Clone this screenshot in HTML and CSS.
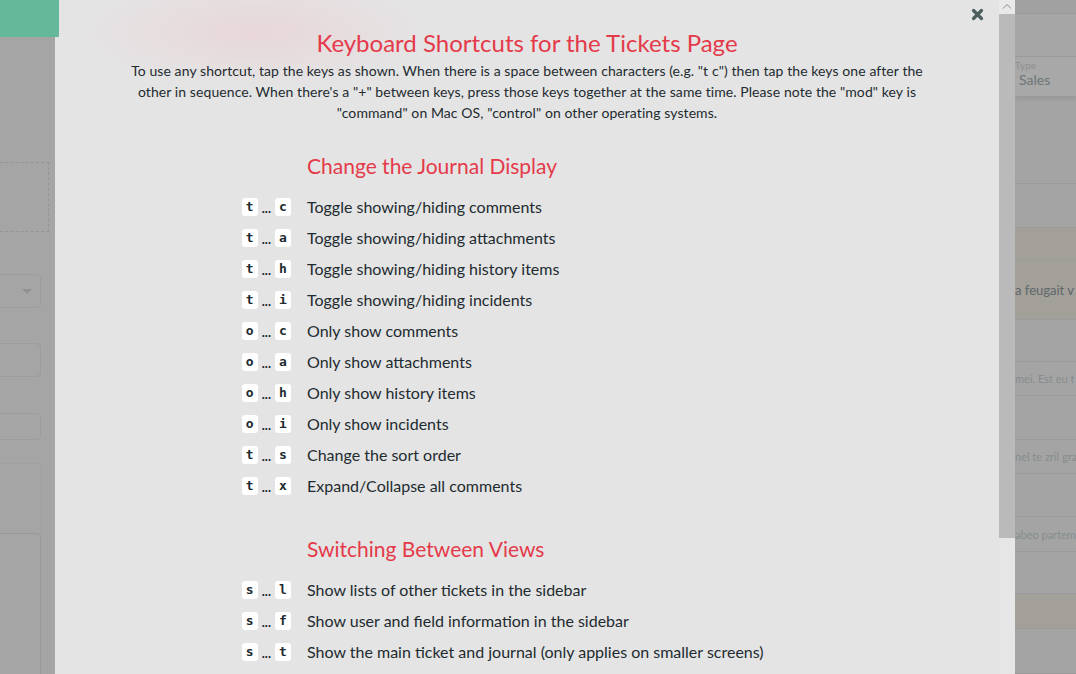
FILE: index.html
```html
<!DOCTYPE html>
<html lang="en">
<head>
<meta charset="utf-8">
<title>Keyboard Shortcuts</title>
<link rel="stylesheet" href="styles.css">
</head>
<body>
<div class="app">
  <aside class="bg-left">
    <div class="dash-box"></div>
    <div class="field select"><span class="caret"></span></div>
    <div class="field input1"></div>
    <div class="field input2"></div>
    <div class="field faint"></div>
    <div class="field textarea"></div>
  </aside>

  <main class="modal">
    <div class="modal-body">
      <button class="close" aria-label="Close">
        <svg width="13" height="13" viewBox="0 0 13 13"><path d="M2.5 2.5 L10.5 10.5 M10.5 2.5 L2.5 10.5" stroke="#4d5e5e" stroke-width="3.2" stroke-linecap="round"/></svg>
      </button>
      <h1 class="title">Keyboard Shortcuts for the Tickets Page</h1>
      <p class="intro">To use any shortcut, tap the keys as shown. When there is a space between characters (e.g. "t c") then tap the keys one after the other in sequence. When there's a "+" between keys, press those keys together at the same time. Please note the "mod" key is "command" on Mac OS, "control" on other operating systems.</p>

      <section class="group">
        <h2 class="group-title">Change the Journal Display</h2>
        <div class="row"><span class="keys"><kbd>t</kbd><i>...</i><kbd>c</kbd></span><span class="desc">Toggle showing/hiding comments</span></div>
        <div class="row"><span class="keys"><kbd>t</kbd><i>...</i><kbd>a</kbd></span><span class="desc">Toggle showing/hiding attachments</span></div>
        <div class="row"><span class="keys"><kbd>t</kbd><i>...</i><kbd>h</kbd></span><span class="desc">Toggle showing/hiding history items</span></div>
        <div class="row"><span class="keys"><kbd>t</kbd><i>...</i><kbd>i</kbd></span><span class="desc">Toggle showing/hiding incidents</span></div>
        <div class="row"><span class="keys"><kbd>o</kbd><i>...</i><kbd>c</kbd></span><span class="desc">Only show comments</span></div>
        <div class="row"><span class="keys"><kbd>o</kbd><i>...</i><kbd>a</kbd></span><span class="desc">Only show attachments</span></div>
        <div class="row"><span class="keys"><kbd>o</kbd><i>...</i><kbd>h</kbd></span><span class="desc">Only show history items</span></div>
        <div class="row"><span class="keys"><kbd>o</kbd><i>...</i><kbd>i</kbd></span><span class="desc">Only show incidents</span></div>
        <div class="row"><span class="keys"><kbd>t</kbd><i>...</i><kbd>s</kbd></span><span class="desc">Change the sort order</span></div>
        <div class="row"><span class="keys"><kbd>t</kbd><i>...</i><kbd>x</kbd></span><span class="desc">Expand/Collapse all comments</span></div>
      </section>

      <section class="group second">
        <h2 class="group-title">Switching Between Views</h2>
        <div class="row"><span class="keys"><kbd>s</kbd><i>...</i><kbd>l</kbd></span><span class="desc">Show lists of other tickets in the sidebar</span></div>
        <div class="row"><span class="keys"><kbd>s</kbd><i>...</i><kbd>f</kbd></span><span class="desc">Show user and field information in the sidebar</span></div>
        <div class="row"><span class="keys"><kbd>s</kbd><i>...</i><kbd>t</kbd></span><span class="desc">Show the main ticket and journal (only applies on smaller screens)</span></div>
      </section>
    </div>
    <div class="scrollbar">
      <div class="sb-btn"><svg width="10" height="6" viewBox="0 0 10 6"><path d="M1 5.5 L5 1.5 L9 5.5" fill="none" stroke="#8c8c8c" stroke-width="1"/></svg></div>
      <div class="sb-thumb"></div>
      <div class="sb-track"></div>
    </div>
  </main>

  <aside class="bg-right">
    <div class="r-top"></div>
    <div class="r-band"></div>
    <div class="r-type"><span class="lbl">Type</span><span class="val">Sales</span></div>
    <div class="r-row h88"></div>
    <div class="r-row h44"></div>
    <div class="r-row h33 beige"></div>
    <div class="r-row h59 beige"><span class="txt big">a feugait v</span></div>
    <div class="r-row h42"></div>
    <div class="r-row h34"><span class="txt">mei. Est eu t</span></div>
    <div class="r-row h44"></div>
    <div class="r-row h34"><span class="txt">nel te zril gra</span></div>
    <div class="r-row h43"></div>
    <div class="r-row h35"><span class="txt">abeo partem</span></div>
    <div class="r-row h42"></div>
    <div class="r-row h35 beige"></div>
    <div class="r-row h45"></div>
  </aside>

  <div class="toast"></div>
</div>
</body>
</html>
```

FILE: styles.css
```css
* { box-sizing: border-box; }
html, body { margin: 0; padding: 0; }
body {
  width: 1076px;
  height: 674px;
  overflow: hidden;
  background: #a5a5a5;
  font-family: Lato, "Open Sans", sans-serif;
  color: #1e2b30;
}
.app {
  position: relative;
  display: flex;
  height: 674px;
}

/* dimmed background – left */
.bg-left {
  width: 55px;
  flex: none;
  display: flex;
  flex-direction: column;
  overflow: hidden;
}
.bg-left > * { flex: none; }
.dash-box {
  margin-top: 162px;
  margin-left: -10px;
  width: 59px;
  height: 70px;
  border: 1px dashed #959595;
}
.field {
  margin-left: -10px;
  width: 51px;
  border: 1px solid #9c9c9c;
  border-radius: 4px;
}
.select { margin-top: 42px; height: 34px; position: relative; }
.caret {
  position: absolute;
  left: 31px;
  top: 14px;
  border-left: 5px solid transparent;
  border-right: 5px solid transparent;
  border-top: 5px solid #919191;
}
.input1 { margin-top: 35px; height: 34px; }
.input2 { margin-top: 36px; height: 27px; }
.faint { margin-top: 23px; height: 70px; border-color: #a1a1a1; border-radius: 0; border-left: none; border-bottom: none; }
.textarea { margin-top: 0; height: 200px; border-color: #999; }

/* toast */
.toast {
  position: absolute;
  left: 0;
  top: 0;
  width: 59px;
  height: 37px;
  background: #65b89a;
}

/* modal */
.modal {
  width: 960px;
  flex: none;
  display: flex;
  background:
    radial-gradient(ellipse 180px 55px at 200px 32px, rgba(233, 213, 216, 0.9), rgba(228, 228, 228, 0) 100%),
    #e4e4e4;
}
.modal-body {
  position: relative;
  width: 944px;
  flex: none;
  padding-top: 28px;
}
.close {
  position: absolute;
  left: 916px;
  top: 8px;
  width: 13px;
  height: 13px;
  padding: 0;
  border: 0;
  background: none;
  line-height: 0;
}
.title {
  margin: 0;
  text-align: center;
  font-weight: 400;
  font-size: 24px;
  line-height: 29px;
  color: #e43a4a;
}
.intro {
  margin: 3px auto 0;
  width: 810px;
  text-align: center;
  font-size: 14px;
  letter-spacing: 0.08px;
  line-height: 21px;
  color: #1e2b30;
}
.group {
  margin-top: 30px;
  display: grid;
  grid-template-columns: 236px 1fr;
  column-gap: 16px;
}
.group.second { margin-top: 35px; }
.group-title {
  grid-column: 2;
  margin: 0 0 12px;
  font-weight: 400;
  font-size: 21px;
  line-height: 26px;
  color: #e43a4a;
}
.second .group-title { margin-bottom: 12px; }
.row { display: contents; }
.keys {
  grid-column: 1;
  justify-self: end;
  display: flex;
  align-items: center;
  gap: 4px;
  height: 31px;
}
.keys i {
  font-style: normal;
  font-weight: 700;
  font-size: 13px;
  line-height: 18px;
  padding-top: 2px;
  color: #1e2b30;
}
kbd {
  display: inline-block;
  min-width: 16px;
  height: 18px;
  padding: 0 4px;
  border-radius: 3px;
  background: #fff;
  font-family: "DejaVu Sans Mono", monospace;
  font-weight: 700;
  font-size: 13px;
  line-height: 18px;
  text-align: center;
  color: #1e2b30;
}
.desc {
  grid-column: 2;
  height: 31px;
  line-height: 31px;
  font-size: 16px;
  color: #1e2b30;
  white-space: nowrap;
}

/* scrollbar */
.scrollbar {
  width: 16px;
  flex: none;
  display: flex;
  flex-direction: column;
}
.sb-btn {
  height: 14px;
  background: #e9e9e9;
  display: flex;
  justify-content: center;
  align-items: flex-start;
  padding-top: 3px;
}
.sb-thumb { height: 524px; background: #bababa; }
.sb-track { flex: 1; background: #e6e6e6; }

/* dimmed background – right */
.bg-right {
  flex: 1;
  display: flex;
  flex-direction: column;
  overflow: hidden;
  background: #a4a4a4;
}
.bg-right > * { flex: none; }
.r-top { height: 14px; border-bottom: 1px solid #9b9b9b; background: #a1a1a1; }
.r-band { height: 43px; border-bottom: 1px solid #9b9b9b; background: #a6a6a6; }
.r-type {
  height: 39px;
  padding-top: 3px;
  display: flex;
  flex-direction: column;
  background: #a8a8a8;
  box-shadow: 0 3px 4px rgba(0,0,0,0.08);
}
.r-type .lbl { font-size: 10px; line-height: 11px; color: #8f8f8f; }
.r-type .val { font-size: 14px; line-height: 17px; color: #6d7677; margin-left: 4px; }
.r-row { border-bottom: 1px solid #9b9b9b; display: flex; align-items: center; }
.r-row.beige { background: #a39f99; }
.h33 { height: 33px; }
.h34 { height: 34px; }
.h35 { height: 35px; }
.h42 { height: 42px; }
.h43 { height: 43px; }
.h44 { height: 44px; }
.h45 { height: 45px; }
.h59 { height: 59px; }
.h88 { height: 88px; }
.txt {
  white-space: nowrap;
  font-size: 11px;
  color: #858d8e;
}
.txt.big { font-size: 13px; color: #5d686a; }
```
